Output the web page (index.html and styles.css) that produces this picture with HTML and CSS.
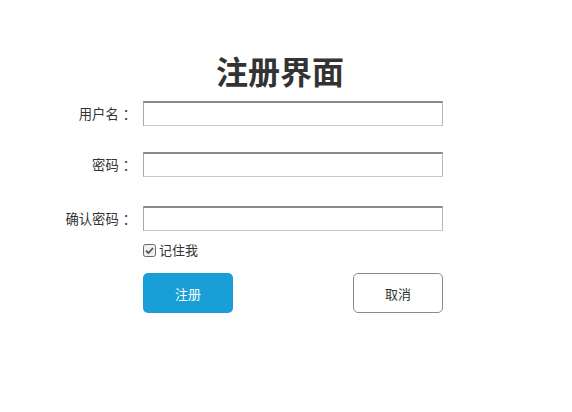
FILE: index.html
```html
<!DOCTYPE html>
<html lang="zh-CN">
<head>
<meta charset="utf-8">
<title>注册界面</title>
<link rel="stylesheet" href="styles.css">
</head>
<body>
<div class="page">
  <h1 class="title">注册界面</h1>
  <form class="form">
    <div class="row row-first">
      <label class="label">用户名<span class="colon">：</span></label>
      <input class="field" type="text">
    </div>
    <div class="row row-second">
      <label class="label">密码<span class="colon">：</span></label>
      <input class="field" type="password">
    </div>
    <div class="row row-third">
      <label class="label">确认密码<span class="colon">：</span></label>
      <input class="field" type="password">
    </div>
    <div class="remember">
      <span class="check">
        <svg width="13" height="13" viewBox="0 0 13 13">
          <rect x="0.5" y="0.5" width="12" height="12" rx="2" fill="#efefef" stroke="#6a6a6a"/>
          <path d="M3 6.6 L5.4 9 L10 4" fill="none" stroke="#555" stroke-width="1.8"/>
        </svg>
      </span>
      <span class="remember-text">记住我</span>
    </div>
    <div class="actions">
      <button type="button" class="btn btn-primary">注册</button>
      <button type="button" class="btn btn-default">取消</button>
    </div>
  </form>
</div>
</body>
</html>
```

FILE: styles.css
```css
html, body {
  margin: 0;
  padding: 0;
  background: #fff;
}

body {
  font-family: "Noto Sans CJK SC", "Noto Sans", sans-serif;
  color: #333;
  font-size: 13px;
}

.page {
  width: 560px;
  padding-top: 50px;
}

.title {
  margin: 0;
  font-size: 32px;
  line-height: 40px;
  font-weight: bold;
  text-align: center;
  color: #333;
}

.form {
  margin-top: 11px;
}

.row {
  display: flex;
  align-items: center;
  height: 25px;
}

.row-second {
  margin-top: 26px;
}

.row-third {
  margin-top: 29px;
}

.label {
  width: 132px;
  margin-right: 11px;
  text-align: right;
  font-size: 13.3px;
  line-height: 25px;
  color: #333;
  text-spacing-trim: space-all;
}

.colon {
  display: inline-block;
  box-sizing: border-box;
  width: 13.3px;
  padding-left: 4px;
  white-space: nowrap;
}

.field {
  box-sizing: border-box;
  width: 300px;
  height: 25px;
  margin: 0;
  padding: 0 4px;
  border: 1px solid #c8c8c8;
  border-top: 2px solid #8a8a8a;
  border-left: 1px solid #a8a8a8;
  border-right: 1px solid #b8b8b8;
  background: #fff;
  outline: none;
}

.remember {
  display: flex;
  align-items: center;
  margin-top: 12px;
  padding-left: 143px;
  height: 14px;
}

.check {
  display: flex;
  width: 13px;
  height: 13px;
  margin-right: 3px;
}

.remember-text {
  font-size: 13px;
  line-height: 14px;
  color: #333;
}

.actions {
  display: flex;
  justify-content: space-between;
  width: 300px;
  margin-top: 16px;
  margin-left: 143px;
}

.btn {
  box-sizing: border-box;
  width: 90px;
  height: 40px;
  border-radius: 5px;
  font-family: "Noto Sans CJK SC", "Noto Sans", sans-serif;
  font-size: 13px;
  cursor: pointer;
}

.btn-primary {
  background: #199ed8;
  border: none;
  color: #fff;
}

.btn-default {
  background: #fff;
  border: 1px solid #8a8a8a;
  color: #333;
}
```
